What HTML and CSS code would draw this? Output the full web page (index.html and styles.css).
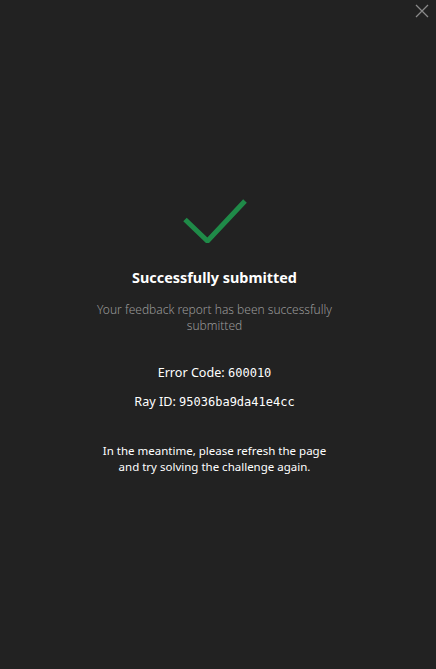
FILE: index.html
```html
<!DOCTYPE html>
<html lang="en">
<head>
<meta charset="utf-8">
<link rel="stylesheet" href="styles.css">
</head>
<body>
<div class="page">
  <button class="close" aria-label="Close">
    <svg width="14" height="14" viewBox="0 0 14 14"><path d="M1 1L13 13M13 1L1 13" stroke="#8a8a8a" stroke-width="1.3" fill="none"/></svg>
  </button>
  <main class="content">
    <svg class="check" width="66" height="46" viewBox="0 0 66 46"><path d="M3 22.5L25.5 44L63 4" stroke="#1f8a48" stroke-width="5" fill="none"/></svg>
    <h1 class="title">Successfully submitted</h1>
    <p class="desc">Your feedback report has been successfully submitted</p>
    <p class="info">Error Code: <span class="mono">600010</span></p>
    <p class="info ray">Ray ID: <span class="mono">95036ba9da41e4cc</span></p>
    <p class="note">In the meantime, please refresh the page and try solving the challenge again.</p>
  </main>
</div>
</body>
</html>
```
FILE: styles.css
```css
html, body {
  margin: 0;
  padding: 0;
  background: #222222;
  height: 100%;
}
.page {
  position: relative;
  height: 669px;
  font-family: "Noto Sans", "Open Sans", sans-serif;
  color: #ffffff;
}
.close {
  position: absolute;
  top: 4px;
  right: 7px;
  background: none;
  border: 0;
  padding: 0;
  width: 14px;
  height: 14px;
}
.content {
  display: flex;
  flex-direction: column;
  align-items: center;
  text-align: center;
  padding: 197px 7px 0 0;
}
.check {
  display: block;
  margin-left: 0;
}
.title {
  margin: 25px 0 0;
  font-size: 14.4px;
  font-weight: 700;
  line-height: 20px;
}
.desc {
  margin: 14px 0 0;
  width: 250px;
  font-size: 12px;
  line-height: 16px;
  color: #999999;
  font-weight: 300;
}
.info {
  margin: 30px 0 0;
  font-size: 12.6px;
  line-height: 18px;
}
.ray {
  margin-top: 11px;
}
.mono {
  font-family: "DejaVu Sans Mono", "Liberation Mono", monospace;
  font-size: 12px;
}
.note {
  margin: 32px 0 0;
  width: 240px;
  font-size: 11.5px;
  line-height: 16px;
}
```
